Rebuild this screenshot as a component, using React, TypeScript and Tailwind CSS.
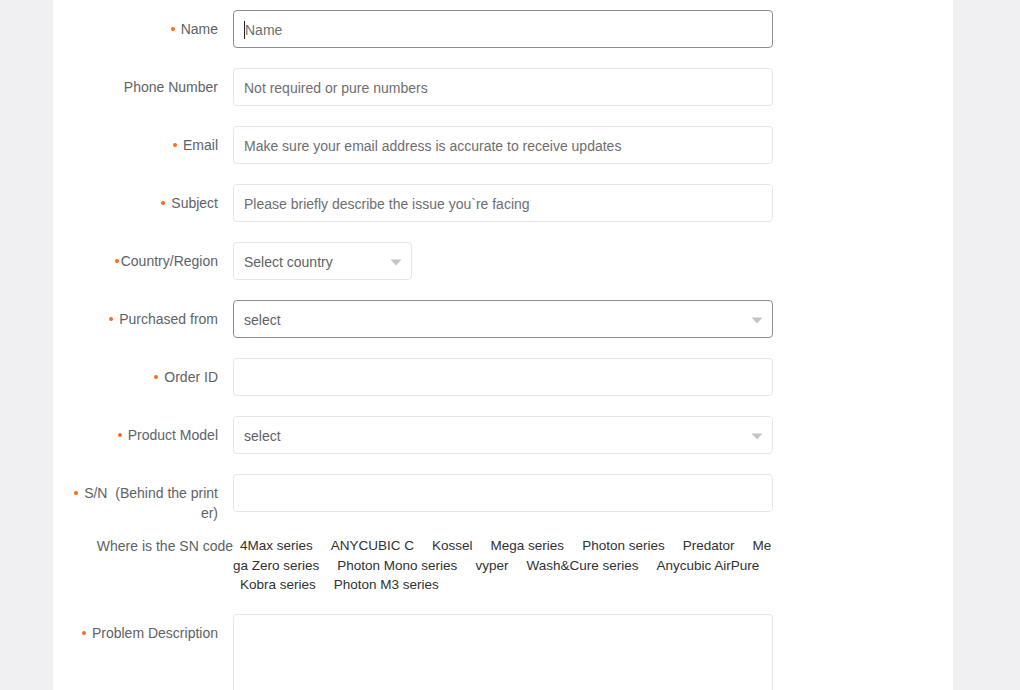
const seriesList = [
  "4Max series",
  "ANYCUBIC C",
  "Kossel",
  "Mega series",
  "Photon series",
  "Predator",
  "Mega Zero series",
  "Photon Mono series",
  "vyper",
  "Wash&Cure series",
  "Anycubic AirPure",
  "Kobra series",
  "Photon M3 series",
];

function Dot({ tight }: { tight?: boolean }) {
  return (
    <span
      className={`relative -top-[1px] inline-block h-[4px] w-[4px] rounded-full bg-[#ff6a13] align-middle ${
        tight ? "mr-[2px]" : "mr-[6px]"
      }`}
    />
  );
}

function Label({
  text,
  required,
  tight,
}: {
  text: string;
  required?: boolean;
  tight?: boolean;
}) {
  return (
    <div className="w-[180px] shrink-0 pr-[15px] pt-[9px] text-right text-[14px] leading-[20px] text-[#606266]">
      {required && <Dot tight={tight} />}
      {text}
    </div>
  );
}

function Arrow() {
  return (
    <svg width="12" height="7" viewBox="0 0 12 7" className="shrink-0">
      <path d="M0.5 0.5 L11.5 0.5 L6 6.5 Z" fill="#c0c4cc" />
    </svg>
  );
}

function TextInput({
  placeholder,
  active,
  caret,
}: {
  placeholder?: string;
  active?: boolean;
  caret?: boolean;
}) {
  return (
    <div
      className={`flex h-[38px] w-[540px] items-center rounded-[4px] border bg-white px-[10px] pt-[2px] text-[14px] ${
        active ? "border-[#8c8c8c]" : "border-[#e4e6eb]"
      }`}
    >
      {caret && <span className="h-[18px] w-px bg-[#222]" />}
      <span className="text-[#6e6e6e]">{placeholder}</span>
    </div>
  );
}

function SelectBox({
  placeholder,
  active,
  narrow,
}: {
  placeholder: string;
  active?: boolean;
  narrow?: boolean;
}) {
  return (
    <div
      className={`flex h-[38px] items-center justify-between rounded-[4px] border bg-white pl-[10px] pr-[9px] pt-[2px] text-[14px] ${
        active ? "border-[#8c8c8c]" : "border-[#e4e6eb]"
      } ${narrow ? "w-[179px]" : "w-[540px]"}`}
    >
      <span className="text-[#606266]">{placeholder}</span>
      <Arrow />
    </div>
  );
}

export default function App() {
  return (
    <div
      className="flex min-h-[690px] justify-start bg-[#f0f0f2] pl-[53px]"
      style={{ fontFamily: '"Liberation Sans", Arial, sans-serif' }}
    >
      <div className="h-[690px] w-[900px] overflow-hidden bg-white pt-[10px]">
        <div className="mb-[20px] flex">
          <Label text="Name" required />
          <TextInput placeholder="Name" active caret />
        </div>
        <div className="mb-[20px] flex">
          <Label text="Phone Number" />
          <TextInput placeholder="Not required or pure numbers" />
        </div>
        <div className="mb-[20px] flex">
          <Label text="Email" required />
          <TextInput placeholder="Make sure your email address is accurate to receive updates" />
        </div>
        <div className="mb-[20px] flex">
          <Label text="Subject" required />
          <TextInput placeholder="Please briefly describe the issue you`re facing" />
        </div>
        <div className="mb-[20px] flex">
          <Label text="Country/Region" required tight />
          <SelectBox placeholder="Select country" narrow />
        </div>
        <div className="mb-[20px] flex">
          <Label text="Purchased from" required />
          <SelectBox placeholder="select" active />
        </div>
        <div className="mb-[20px] flex">
          <Label text="Order ID" required />
          <TextInput />
        </div>
        <div className="mb-[20px] flex">
          <Label text="Product Model" required />
          <SelectBox placeholder="select" />
        </div>
        <div className="mb-[13px] flex items-start">
          <div className="w-[180px] shrink-0 break-all pl-[14px] pr-[15px] pt-[9px] text-right text-[14px] leading-[20px] text-[#606266]">
            <Dot />
            S/N&nbsp;&nbsp;(Behind the printer)
          </div>
          <TextInput />
        </div>
        <div className="mb-[19px] flex items-start">
          <div className="w-[180px] shrink-0 whitespace-nowrap text-right text-[14px] leading-[20px] text-[#606266]">
            Where is the SN code
          </div>
          <div className="w-[540px] break-all text-[13.5px] leading-[19.5px] text-[#303133]">
            {seriesList.map((s) => (
              <span key={s} className="ml-[7px] mr-[11px]">
                {s}
              </span>
            ))}
          </div>
        </div>
        <div className="flex">
          <Label text="Problem Description" required />
          <div className="h-[120px] w-[540px] rounded-[4px] border border-[#e4e6eb] bg-white" />
        </div>
      </div>
    </div>
  );
}
